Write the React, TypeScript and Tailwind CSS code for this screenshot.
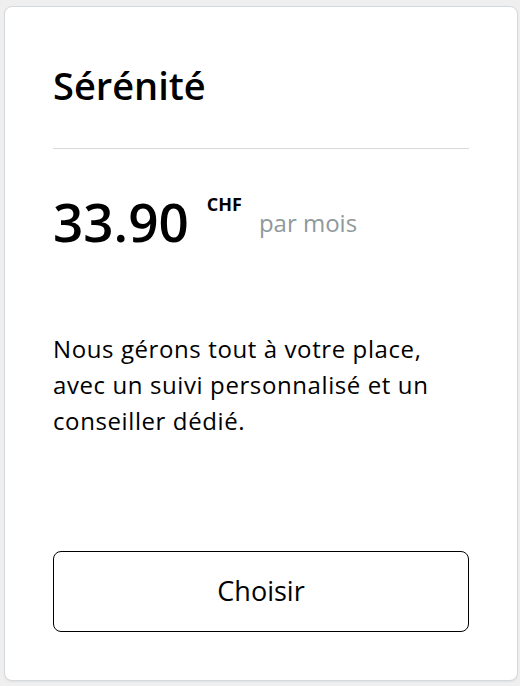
export default function App() {
  return (
    <div className="min-h-screen bg-[#efefef] pt-[6px] pl-[4px] font-['Open_Sans',sans-serif]">
      <div className="flex h-[675px] w-[514px] flex-col rounded-[8px] border border-[#d3d9dd] bg-white p-12 shadow-[0_1px_2px_rgba(0,0,0,0.06)]">
        {/* Header */}
        <h2 className="text-[38px] font-semibold leading-[60px] text-black">Sérénité</h2>
        <div className="mt-[33px] h-px bg-[#d6dadd]" />

        {/* Price */}
        <div className="mt-[45px] flex items-start">
          <span className="text-[53px] font-semibold leading-[56px] text-black">33.90</span>
          <span className="ml-[18px] mt-[1px] text-[18px] font-bold leading-[18px] text-black">CHF</span>
          <span className="ml-[17px] mt-[15px] text-[24px] leading-[28px] text-[#8f999c]">par mois</span>
        </div>

        {/* Description */}
        <p className="mt-[81px] max-w-[400px] text-[24px] leading-[36px] tracking-[0.6px] text-black">
          Nous gérons tout à votre place, avec un suivi personnalisé et un conseiller dédié.
        </p>

        <div className="flex-1" />

        <button className="h-[81px] w-full rounded-[8px] border border-black text-[27px] text-black">
          Choisir
        </button>
      </div>
    </div>
  );
}
